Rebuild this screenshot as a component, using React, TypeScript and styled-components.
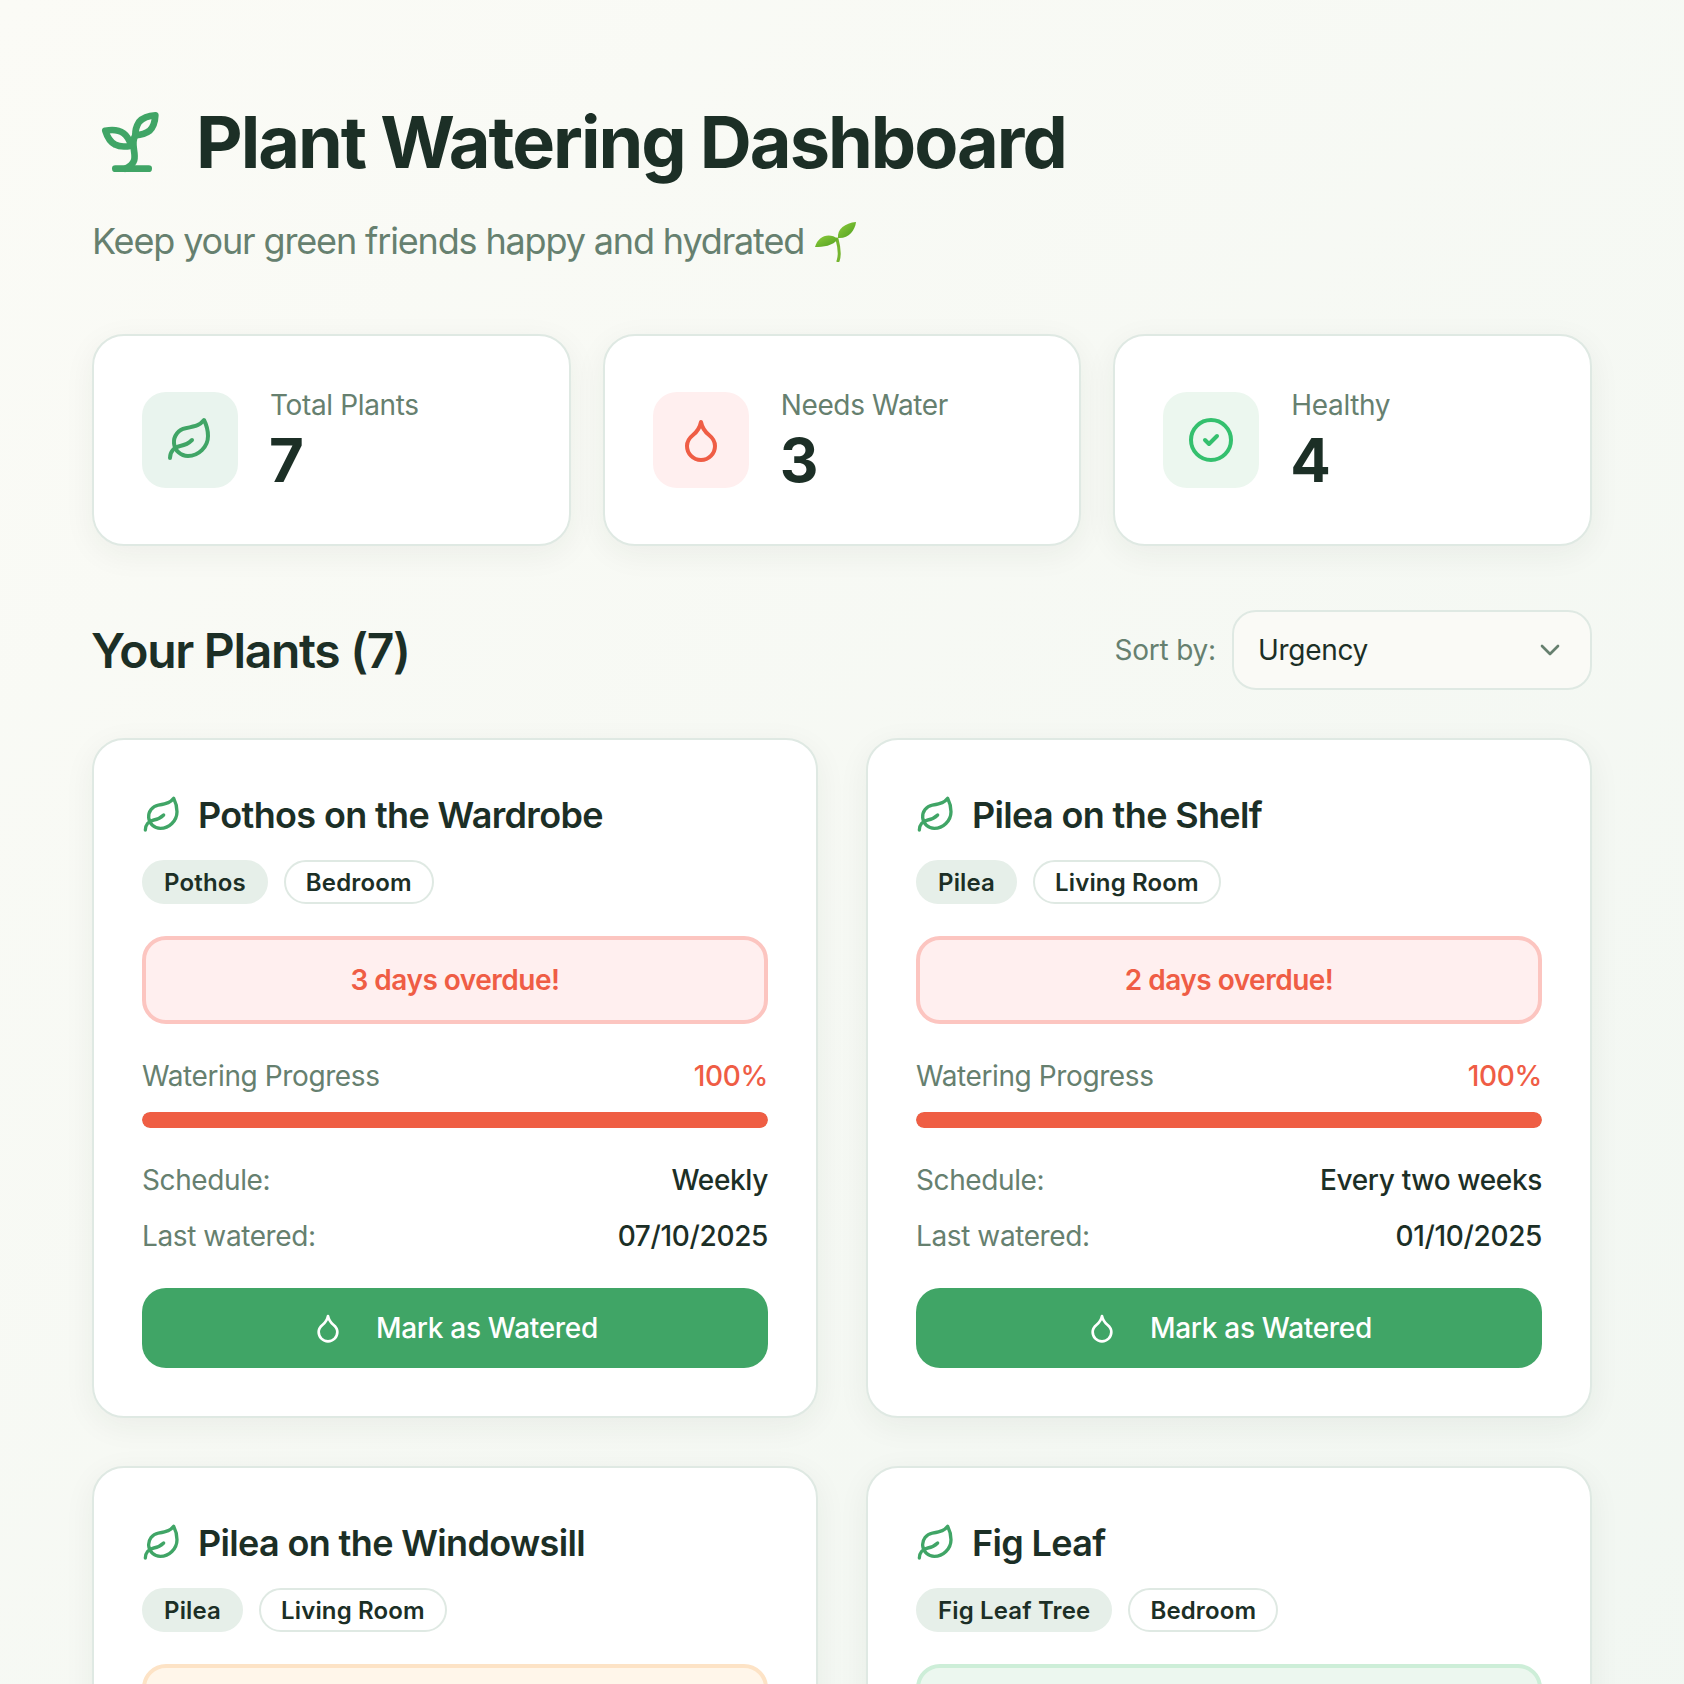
import React from "react";
import styled, { createGlobalStyle } from "styled-components";
import { ChevronDown, CircleCheck } from "lucide-react";

const Global = createGlobalStyle`
  html, body { margin: 0; padding: 0; height: 1684px; overflow: hidden; }
  body { font-family: Inter, "Liberation Sans", sans-serif; color: #1c2f26; }
  * { box-sizing: border-box; }
`;

const Page = styled.div`
  min-height: 1684px;
  background: linear-gradient(135deg, #fbfbf6 0%, #f0f6f1 100%);
  padding: 97px 92px;
`;
const Header = styled.header`
  margin-bottom: 66px;
`;
const TitleRow = styled.div`
  display: flex;
  align-items: center;
  gap: 24px;
  margin-bottom: 27px;
`;
const Title = styled.h1`
  margin: 0;
  font-size: 72px;
  line-height: 90px;
  font-weight: 700;
  letter-spacing: -2px;
  color: #1c2f26;
`;
const Subtitle = styled.p`
  margin: 0;
  display: flex;
  align-items: center;
  gap: 11px;
  font-size: 36px;
  line-height: 54px;
  letter-spacing: -1.15px;
  color: #66806f;
`;
const Stats = styled.section`
  display: grid;
  grid-template-columns: repeat(3, 1fr);
  gap: 32px;
  margin-bottom: 64px;
`;
const StatCard = styled.div`
  display: flex;
  align-items: center;
  gap: 32px;
  height: 212px;
  padding: 48px;
  background: #fff;
  border: 2px solid #dfe9e3;
  border-radius: 32px;
  box-shadow: 0 8px 32px rgba(31, 51, 41, 0.06);
`;
const StatIcon = styled.div<{ $bg: string; $fg: string }>`
  width: 96px;
  height: 96px;
  flex: none;
  display: flex;
  align-items: center;
  justify-content: center;
  border-radius: 24px;
  background: ${(p) => p.$bg};
  color: ${(p) => p.$fg};
`;
const StatLabel = styled.div`
  font-size: 28px;
  line-height: 40px;
  letter-spacing: -0.35px;
  color: #66806f;
`;
const StatValue = styled.div`
  font-size: 60px;
  line-height: 70px;
  font-weight: 700;
  margin-left: -1px;
  color: #1c2f26;
`;
const ListHead = styled.div`
  display: flex;
  align-items: center;
  justify-content: space-between;
  margin-bottom: 48px;
`;
const ListTitle = styled.h2`
  margin: 2px 0 0 -1px;
  font-size: 48px;
  line-height: 70px;
  font-weight: 600;
  letter-spacing: -1.3px;
  color: #1c2f26;
`;
const SortBox = styled.div`
  display: flex;
  align-items: center;
  gap: 16px;
`;
const SortLabel = styled.span`
  font-size: 28px;
  letter-spacing: -0.2px;
  color: #66806f;
`;
const Select = styled.div`
  width: 360px;
  height: 80px;
  display: flex;
  align-items: center;
  justify-content: space-between;
  padding: 0 24px;
  border: 2px solid #dfe9e3;
  border-radius: 24px;
  background: #fafaf6;
  font-size: 28px;
  letter-spacing: -0.3px;
  color: #1c2f26;
  svg { color: #66806f; }
`;
const Grid = styled.section`
  display: grid;
  grid-template-columns: repeat(2, 1fr);
  gap: 48px;
`;
const Card = styled.article`
  padding: 48px;
  background: #fff;
  border: 2px solid #dfe9e3;
  border-radius: 32px;
  box-shadow: 0 8px 32px rgba(31, 51, 41, 0.06);
`;
const CardTitleRow = styled.div`
  display: flex;
  align-items: center;
  gap: 16px;
  margin-bottom: 18px;
`;
const CardTitle = styled.h3`
  margin: 0;
  font-size: 36px;
  line-height: 54px;
  font-weight: 600;
  letter-spacing: -0.65px;
  color: #1c2f26;
`;
const Chips = styled.div`
  display: flex;
  gap: 16px;
  margin-bottom: 32px;
`;
const Chip = styled.span<{ $outline?: boolean }>`
  height: 44px;
  display: inline-flex;
  align-items: center;
  padding: 0 20px;
  border-radius: 22px;
  font-size: 24px;
  font-weight: 600;
  letter-spacing: 0.15px;
  color: #1c2f26;
  background: ${(p) => (p.$outline ? "#fff" : "#e6efe9")};
  border: 2px solid ${(p) => (p.$outline ? "#dfe9e3" : "#e6efe9")};
`;
const tones = {
  red: { bg: "#ffefef", border: "#fcc5c0", fg: "#ef5d45" },
  orange: { bg: "#fff6ea", border: "#fde3c6", fg: "#e8903a" },
  green: { bg: "#ecf7ef", border: "#cdeed8", fg: "#2fa85f" },
};
type Tone = keyof typeof tones;
const Alert = styled.div<{ $tone: Tone }>`
  height: 88px;
  display: flex;
  align-items: center;
  justify-content: center;
  margin-bottom: 31px;
  border-radius: 24px;
  border: 4px solid ${(p) => tones[p.$tone].border};
  background: ${(p) => tones[p.$tone].bg};
  color: ${(p) => tones[p.$tone].fg};
  font-size: 28px;
  font-weight: 600;
  letter-spacing: -0.5px;
`;
const Row = styled.div<{ $mb: number }>`
  display: flex;
  justify-content: space-between;
  align-items: center;
  height: 42px;
  margin-bottom: ${(p) => p.$mb}px;
  font-size: 28px;
  letter-spacing: -0.4px;
  color: #66806f;
`;
const RowValue = styled.span<{ $color?: string }>`
  font-weight: 500;
  letter-spacing: -0.35px;
  color: ${(p) => p.$color || "#1c2f26"};
`;
const Track = styled.div`
  height: 16px;
  border-radius: 8px;
  background: #e6efe9;
  overflow: hidden;
  margin-bottom: 31px;
`;
const Fill = styled.div<{ $color: string }>`
  height: 100%;
  border-radius: 8px;
  background: ${(p) => p.$color};
`;
const WaterButton = styled.button`
  width: 100%;
  height: 80px;
  display: flex;
  align-items: center;
  justify-content: center;
  gap: 32px;
  border: 0;
  border-radius: 24px;
  background: #40a566;
  color: #fff;
  font-family: inherit;
  font-size: 28px;
  font-weight: 500;
  letter-spacing: -0.3px;
`;

const Sprout = () => (
  <svg width="80" height="80" viewBox="0 0 24 24" fill="none" stroke="#40a566" strokeWidth="2" strokeLinecap="round" strokeLinejoin="round">
    <path d="M7 20h10" />
    <path d="M10 20c5.5-2.5.8-6.4 3-10" />
    <path d="M9.5 9.4c1.1.8 1.8 2.2 2.3 3.7-2 .4-3.5.4-4.8-.3-1.2-.6-2.3-1.9-3-4.2 2.8-.5 4.4 0 5.5.8z" />
    <path d="M14.1 6a7 7 0 0 0-1.1 4c1.9-.1 3.3-.6 4.3-1.4 1-1 1.6-2.3 1.7-4.6-2.7.1-4 1-4.9 2z" />
  </svg>
);
const Leaf = ({ size }: { size: number }) => (
  <svg width={size} height={size} viewBox="0 0 24 24" fill="none" stroke="#40a566" strokeWidth="2" strokeLinecap="round" strokeLinejoin="round">
    <path d="M11 20A7 7 0 0 1 9.8 6.1C15.5 5 17 4.48 19 2c1 2 2 4.18 2 8 0 5.5-4.78 10-10 10Z" />
    <path d="M2 21c0-3 1.85-5.36 5.08-6C9.5 14.52 12 13 13 12" />
  </svg>
);
const Droplet = ({ size, color }: { size: number; color: string }) => (
  <svg width={size} height={size} viewBox="0 0 24 24" fill="none" stroke={color} strokeWidth="2" strokeLinecap="round" strokeLinejoin="round">
    <path d="M12 22a7 7 0 0 0 7-7c0-2-1-3.9-3-5.5s-3.5-4-4-6.5c-.5 2.5-2 4.9-4 6.5C6 11.1 5 13 5 15a7 7 0 0 0 7 7z" />
  </svg>
);
const SeedlingEmoji = () => (
  <svg width="42" height="42" viewBox="0 0 42 42">
    <defs>
      <linearGradient id="seedLeaf" x1="0" y1="0" x2="1" y2="1">
        <stop offset="0" stopColor="#8fce3c" />
        <stop offset="1" stopColor="#4f9e20" />
      </linearGradient>
    </defs>
    <path d="M22 19C26 34 24 38 23 41" fill="none" stroke="#75b52f" strokeWidth="3" strokeLinecap="round" />
    <path d="M0 27C3 16 14 12 23 19 18 26 8 27 0 27Z" fill="url(#seedLeaf)" />
    <path d="M23 18C22 9 30 3 41 2 40 11 33 19 23 18Z" fill="url(#seedLeaf)" />
  </svg>
);

type Plant = {
  name: string; species: string; room: string; alert: string; tone: Tone;
  progress: number; schedule: string; last: string;
};
const plants: Plant[] = [
  { name: "Pothos on the Wardrobe", species: "Pothos", room: "Bedroom", alert: "3 days overdue!", tone: "red", progress: 100, schedule: "Weekly", last: "07/10/2025" },
  { name: "Pilea on the Shelf", species: "Pilea", room: "Living Room", alert: "2 days overdue!", tone: "red", progress: 100, schedule: "Every two weeks", last: "01/10/2025" },
  { name: "Pilea on the Windowsill", species: "Pilea", room: "Living Room", alert: "", tone: "orange", progress: 90, schedule: "", last: "" },
  { name: "Fig Leaf", species: "Fig Leaf Tree", room: "Bedroom", alert: "", tone: "green", progress: 50, schedule: "", last: "" },
];

export default function App() {
  return (
    <Page>
      <Global />
      <Header>
        <TitleRow>
          <Sprout />
          <Title>Plant Watering Dashboard</Title>
        </TitleRow>
        <Subtitle>Keep your green friends happy and hydrated <SeedlingEmoji /></Subtitle>
      </Header>
      <Stats>
        <StatCard>
          <StatIcon $bg="#e9f4ee" $fg="#40a566"><Leaf size={48} /></StatIcon>
          <div><StatLabel>Total Plants</StatLabel><StatValue>7</StatValue></div>
        </StatCard>
        <StatCard>
          <StatIcon $bg="#ffefef" $fg="#ef5d45"><Droplet size={48} color="#ef5d45" /></StatIcon>
          <div><StatLabel>Needs Water</StatLabel><StatValue>3</StatValue></div>
        </StatCard>
        <StatCard>
          <StatIcon $bg="#ecf7ef" $fg="#34c06e"><CircleCheck size={48} strokeWidth={2} /></StatIcon>
          <div><StatLabel>Healthy</StatLabel><StatValue>4</StatValue></div>
        </StatCard>
      </Stats>
      <ListHead>
        <ListTitle>Your Plants (7)</ListTitle>
        <SortBox>
          <SortLabel>Sort by:</SortLabel>
          <Select>Urgency <ChevronDown size={32} /></Select>
        </SortBox>
      </ListHead>
      <Grid>
        {plants.map((p) => (
          <Card key={p.name}>
            <CardTitleRow>
              <Leaf size={40} />
              <CardTitle>{p.name}</CardTitle>
            </CardTitleRow>
            <Chips>
              <Chip>{p.species}</Chip>
              <Chip $outline>{p.room}</Chip>
            </Chips>
            <Alert $tone={p.tone}>{p.alert}</Alert>
            <Row $mb={15}>
              <span>Watering Progress</span>
              <RowValue $color={tones[p.tone].fg}>{p.progress}%</RowValue>
            </Row>
            <Track><Fill $color="#ef5e44" style={{ width: `${p.progress}%` }} /></Track>
            <Row $mb={14}><span>Schedule:</span><RowValue>{p.schedule}</RowValue></Row>
            <Row $mb={31}><span>Last watered:</span><RowValue>{p.last}</RowValue></Row>
            <WaterButton><Droplet size={32} color="#fff" />Mark as Watered</WaterButton>
          </Card>
        ))}
      </Grid>
    </Page>
  );
}
